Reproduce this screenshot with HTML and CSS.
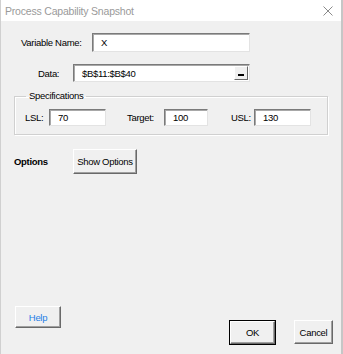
FILE: index.html
```html
<!DOCTYPE html>
<html lang="en">
<head>
  <meta charset="UTF-8">
  <title>Process Capability Snapshot</title>
  <link rel="stylesheet" href="styles.css">
</head>
<body>

  <div class="window">
    <div class="titlebar">
      <span class="title">Process Capability Snapshot</span>
      <svg class="close" width="10" height="10" viewBox="0 0 10 10">
        <path d="M0.5 0.5 L9.5 9.5 M9.5 0.5 L0.5 9.5" stroke="#8a8a8a" stroke-width="1" fill="none"/>
      </svg>
    </div>

    <div class="content">
      <div class="row var-row">
        <label class="var-label">Variable Name:</label>
        <div class="textbox var-box">X</div>
      </div>

      <div class="row data-row">
        <label class="data-label">Data:</label>
        <div class="textbox data-box">
          <span>$B$11:$B$40</span>
          <span class="ref-btn"><i></i></span>
        </div>
      </div>

      <fieldset class="specs">
        <legend>Specifications</legend>
        <div class="spec-row">
          <label class="lsl-label">LSL:</label>
          <div class="textbox lsl-box">70</div>
          <label class="target-label">Target:</label>
          <div class="textbox target-box">100</div>
          <label class="usl-label">USL:</label>
          <div class="textbox usl-box">130</div>
        </div>
      </fieldset>

      <div class="row options-row">
        <b class="options-label">Options</b>
        <button class="btn show-btn">Show Options</button>
      </div>

      <div class="footer">
        <button class="btn help-btn">Help</button>
        <div class="footer-right">
          <button class="btn ok-btn">OK</button>
          <button class="btn cancel-btn">Cancel</button>
        </div>
      </div>
    </div>
  </div>

</body>
</html>
```

FILE: styles.css
```css
* {
  margin: 0;
  padding: 0;
  box-sizing: border-box;
}

body {
  width: 343px;
  height: 354px;
  overflow: hidden;
  background: #c6c6c6;
  font-family: 'Liberation Sans', Arial, sans-serif;
  font-size: 9.5px;
  letter-spacing: -0.3px;
  white-space: nowrap;
  color: #000;
}

.window {
  width: 341px;
  height: 354px;
  display: flex;
  flex-direction: column;
  background: #f0f0f0;
  border-left: 1px solid #d0d0d0;
}

.titlebar {
  height: 21px;
  flex-shrink: 0;
  display: flex;
  justify-content: space-between;
  align-items: center;
  padding: 0 8px 0 4px;
  background: #fff;
  color: #9a9a9a;
  font-size: 10.5px;
  letter-spacing: -0.2px;
}

.content {
  flex: 1;
  display: flex;
  flex-direction: column;
  padding: 12px 0 0 13px;
}

.row {
  display: flex;
  align-items: center;
}

.textbox {
  display: flex;
  align-items: center;
  background: #fff;
  border: 1px solid;
  border-color: #7a7a7a #e3e3e3 #e3e3e3 #7a7a7a;
  box-shadow: inset 1px 1px 0 #a8a8a8;
  padding-left: 8px;
}

.var-label {
  margin-left: 7px;
  width: 71px;
}

.var-box {
  width: 158px;
  height: 19px;
}

.data-row {
  margin-top: 12px;
}

.data-label {
  margin-left: 24px;
  width: 35px;
}

.data-box {
  width: 177px;
  height: 18px;
  justify-content: space-between;
  padding-right: 1px;
}

.ref-btn {
  width: 14px;
  height: 14px;
  display: flex;
  justify-content: center;
  align-items: flex-end;
  padding-bottom: 3px;
  background: #f0f0f0;
  border: 1px solid;
  border-color: #fff #696969 #696969 #fff;
}

.ref-btn i {
  width: 6px;
  height: 2px;
  background: #000;
}

.specs {
  margin-top: 9px;
  width: 314px;
  height: 44px;
  border: 1px solid #d0d0d0;
  box-shadow: inset 1px 1px 0 #fff, 1px 1px 0 #fff;
  padding: 0 0 0 10px;
}

.specs legend {
  margin-left: 1px;
  padding: 0 3px;
  line-height: 10px;
}

.spec-row {
  display: flex;
  align-items: center;
  margin-top: 8px;
}

.lsl-label {
  width: 24px;
}

.lsl-box {
  width: 57px;
  height: 17px;
}

.target-label {
  margin-left: 21px;
  width: 37px;
}

.target-box {
  width: 44px;
  height: 17px;
}

.usl-label {
  margin-left: 23px;
  width: 23px;
}

.usl-box {
  width: 57px;
  height: 17px;
}

.options-row {
  margin-top: 14px;
}

.options-label {
  width: 59px;
}

.btn {
  font-family: inherit;
  font-size: 9.5px;
  letter-spacing: -0.3px;
  color: #000;
  background: #f0f0f0;
  border: 1px solid;
  border-color: #fff #696969 #696969 #fff;
  box-shadow: inset -1px -1px 0 #a0a0a0;
}

.show-btn {
  width: 64px;
  height: 25px;
}

.footer {
  flex: 1;
  display: flex;
  justify-content: space-between;
  align-items: flex-end;
  padding: 0 8px 10px 1px;
}

.help-btn {
  width: 46px;
  height: 22px;
  margin-bottom: 16px;
  color: #1e7ee6;
}

.footer-right {
  display: flex;
  align-items: flex-end;
  gap: 19px;
}

.ok-btn {
  width: 45px;
  height: 23px;
  outline: 1px solid #000;
}

.cancel-btn {
  width: 39px;
  height: 24px;
}
```
